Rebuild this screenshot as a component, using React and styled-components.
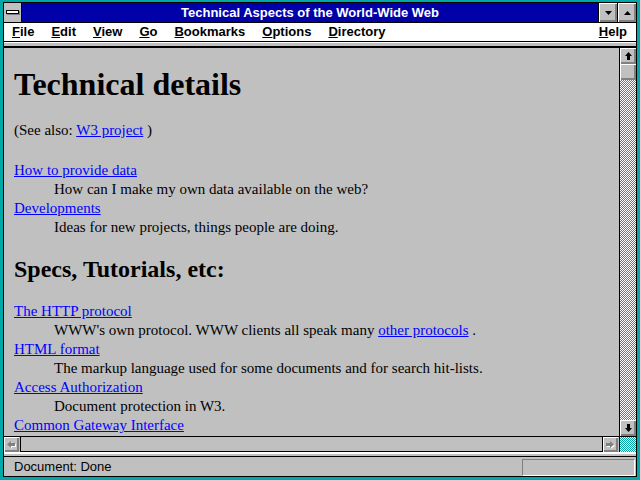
import styled, { createGlobalStyle } from "styled-components";

const TEAL = "#00a8a8";
const GRAY = "#c0c0c0";
const DARK = "#808080";

const GlobalStyle = createGlobalStyle`
	html, body {
		margin: 0;
		padding: 0;
		background: ${GRAY};
	}
`;

const Frame = styled.div`
	width: 640px;
	height: 480px;
	box-sizing: border-box;
	background: ${TEAL};
	padding: 2px 3px 3px 3px;
`;

const Inner = styled.div`
	height: 100%;
	box-sizing: border-box;
	border: 1px solid #000;
	display: flex;
	flex-direction: column;
	background: ${GRAY};
`;

const TitleBar = styled.div`
	height: 19px;
	border-bottom: 1px solid #000;
	display: flex;
	background: #0000a8;
`;

const SysMenu = styled.div`
	width: 17px;
	border-right: 1px solid #000;
	background: ${GRAY};
	display: flex;
	align-items: center;
	justify-content: center;
`;

const SysBar = styled.div`
	width: 11px;
	height: 2px;
	background: #fff;
	border: 1px solid #000;
	box-shadow: 1px 1px 0 ${DARK};
	margin-top: -1px;
`;

const Title = styled.div`
	flex: 1;
	color: #fff;
	font: bold 13px "Liberation Sans", Arial, sans-serif;
	line-height: 19px;
	text-align: center;
`;

const CapButton = styled.div`
	width: 18px;
	border-left: 1px solid #000;
	background: ${GRAY};
	box-shadow: inset 1px 1px 0 #fff, inset -2px -2px 0 ${DARK};
	display: flex;
	align-items: center;
	justify-content: center;
`;

const MenuBar = styled.div`
	height: 18px;
	border-bottom: 1px solid #000;
	background: #fff;
	display: flex;
	gap: 17px;
	padding: 0 9px 0 8px;
	font: bold 13px "Liberation Sans", Arial, sans-serif;
	line-height: 18px;
	color: #000;
`;

const MenuItem = styled.span`
	margin-left: ${props => props.right ? "auto" : "0"};
	span { text-decoration: underline; }
`;

const Divider = styled.div`
	height: 3px;
	border-top: 1px solid #fff;
	border-bottom: 2px solid #000;
	background: ${GRAY};
`;

const ContentRow = styled.div`
	height: 388px;
	display: flex;
`;

const Page = styled.div`
	flex: 1;
	overflow: hidden;
	padding: 0 10px;
	font-family: "Liberation Serif", "Times New Roman", serif;
	font-size: 15px;
	line-height: 19px;
	color: #000;
`;

const H1 = styled.h1`
	margin: 18px 0 0;
	font-size: 32px;
	line-height: 37px;
	font-weight: bold;
`;

const H2 = styled.h2`
	margin: 18px 0 0;
	font-size: 24px;
	line-height: 28px;
	font-weight: bold;
`;

const P = styled.p`
	margin: 18px 0 0;
`;

const DL = styled.dl`
	margin: ${props => props.gap}px 0 0;
	dd { margin: 0 0 0 40px; }
`;

const Link = styled.a`
	color: #0000ff;
	text-decoration: underline;
`;

const VScroll = styled.div`
	width: 16px;
	border-left: 1px solid #000;
	display: flex;
	flex-direction: column;
`;

const Dither = styled.div`
	flex: 1;
	width: 16px;
	background: repeating-conic-gradient(${TEAL} 0% 25%, #fff 0% 50%) 0 0 / 2px 2px;
`;

const SButton = styled.div`
	width: 16px;
	height: 16px;
	box-sizing: border-box;
	background: ${GRAY};
	box-shadow: inset 1px 1px 0 #fff, inset -2px -2px 0 ${DARK};
	display: flex;
	align-items: center;
	justify-content: center;
	flex: none;
`;

const HScroll = styled.div`
	height: 15px;
	border-top: 1px solid #000;
	display: flex;
`;

const HTrack = styled.div`
	flex: 1;
	background: ${GRAY};
	border-bottom: 1px solid #000;
`;

const HButtonWrap = styled.div`
	width: 16px;
	border-left: ${props => props.left ? "1px solid #000" : "none"};
	border-right: ${props => props.left ? "none" : "1px solid #000"};
	display: flex;
`;

const HButton = styled.div`
	width: 15px;
	height: 15px;
	background: ${GRAY};
	box-shadow: inset 1px 1px 0 #fff, inset -2px -2px 0 ${DARK};
	display: flex;
	align-items: center;
	justify-content: center;
`;

const Corner = styled.div`
	width: 16px;
	border-left: 1px solid #000;
	background: repeating-conic-gradient(${TEAL} 0% 25%, #fff 0% 50%) 0 0 / 2px 2px;
`;

const BottomEdge = styled.div`
	height: 2px;
	border-top: 2px solid #fff;
	border-bottom: 1px solid #000;
	background: ${GRAY};
`;

const StatusBar = styled.div`
	height: 19px;
	display: flex;
	align-items: flex-end;
	justify-content: space-between;
	padding: 0 1px 0 10px;
	font: 13px "Liberation Sans", Arial, sans-serif;
	color: #000;
`;

const StatusText = styled.span`
	align-self: center;
	line-height: 19px;
`;

const Progress = styled.div`
	width: 111px;
	height: 15px;
	border: 1px solid;
	border-color: ${DARK} #fff #fff ${DARK};
`;

const Tri = ({ up }) => (
	<svg width="7" height="4" viewBox="0 0 7 4">
		<polygon points={up ? "3.5,0 7,4 0,4" : "0,0 7,0 3.5,4"} fill="#000" />
	</svg>
);

const Arrow = ({ dir }) => (
	<svg width="7" height="8" viewBox="0 0 7 8">
		<polygon
			points={dir === "up" ? "3.5,0 7,4 5,4 5,8 2,8 2,4 0,4" : "2,0 5,0 5,4 7,4 3.5,8 0,4 2,4"}
			fill="#000"
		/>
	</svg>
);

const GrayArrow = ({ dir }) => {
	const pts = dir === "left" ? "0,3.5 4,0 4,2 8,2 8,5 4,5 4,7" : "8,3.5 4,0 4,2 0,2 0,5 4,5 4,7";
	return <svg width="9" height="8" viewBox="0 0 9 8">
		<polygon points={pts} fill="#fff" transform="translate(1,1)" />
		<polygon points={pts} fill={DARK} />
	</svg>
};

const Menu = ["File", "Edit", "View", "Go", "Bookmarks", "Options", "Directory"];

const Entries1 = [
	{ link: "How to provide data", text: "How can I make my own data available on the web?" },
	{ link: "Developments", text: "Ideas for new projects, things people are doing." },
];

const App = () => {
	return <>
		<GlobalStyle />
		<Frame>
			<Inner>
				<TitleBar>
					<SysMenu><SysBar /></SysMenu>
					<Title>Technical Aspects of the World-Wide Web</Title>
					<CapButton><Tri /></CapButton>
					<CapButton><Tri up /></CapButton>
				</TitleBar>

				<MenuBar>
					{
						Menu.map(m => (
							<MenuItem key={m}><span>{m[0]}</span>{m.slice(1)}</MenuItem>
						))
					}
					<MenuItem right><span>H</span>elp</MenuItem>
				</MenuBar>

				<Divider />

				<ContentRow>
					<Page>
						<H1>Technical details</H1>
						<P>(See also: <Link>W3 project</Link> )</P>

						<DL gap={21}>
							{
								Entries1.map(e => (
									<div key={e.link}>
										<dt><Link>{e.link}</Link></dt>
										<dd>{e.text}</dd>
									</div>
								))
							}
						</DL>

						<H2>Specs, Tutorials, etc:</H2>

						{/* last entry's description sits below the fold, so it is left out */}
						<DL gap={19}>
							<dt><Link>The HTTP protocol</Link></dt>
							<dd>WWW's own protocol. WWW clients all speak many <Link>other protocols</Link> .</dd>
							<dt><Link>HTML format</Link></dt>
							<dd>The markup language used for some documents and for search hit-lists.</dd>
							<dt><Link>Access Authorization</Link></dt>
							<dd>Document protection in W3.</dd>
							<dt><Link>Common Gateway Interface</Link></dt>
						</DL>
					</Page>

					<VScroll>
						<SButton><Arrow dir="up" /></SButton>
						<SButton />
						<Dither />
						<SButton><Arrow dir="down" /></SButton>
					</VScroll>
				</ContentRow>

				<HScroll>
					<HButtonWrap><HButton><GrayArrow dir="left" /></HButton></HButtonWrap>
					<HTrack />
					<HButtonWrap left><HButton><GrayArrow dir="right" /></HButton></HButtonWrap>
					<Corner />
				</HScroll>

				<BottomEdge />

				<StatusBar>
					<StatusText>Document: Done</StatusText>
					<Progress />
				</StatusBar>
			</Inner>
		</Frame>
	</>
}

export default App;
